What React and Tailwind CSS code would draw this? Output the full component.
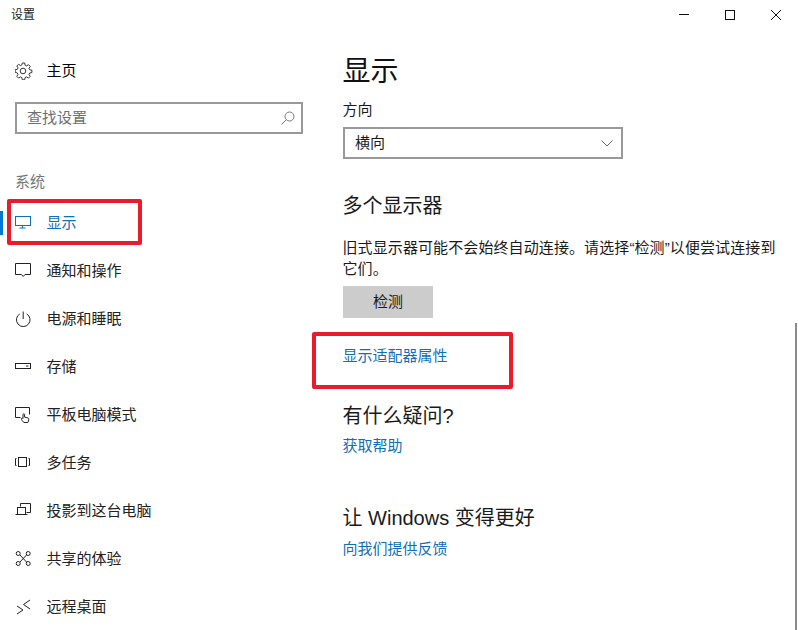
import React from "react";

const S = ({ children }) => (
  <svg width="18" height="18" viewBox="0 0 18 18" fill="none" stroke="currentColor" strokeWidth="1">
    {children}
  </svg>
);

const icons = {
  display: (
    <S>
      <rect x="0.500" y="2.500" width="15" height="9" />
      <path d="M7.500 11.500v2.500M4.500 14h6" />
    </S>
  ),
  notify: (
    <S>
      <path d="M.5 1.500h15v11H10l-1.800 2-1.800-2H.5z" />
    </S>
  ),
  power: (
    <S>
      <path d="M4.800 3.900a6.800 6.800 0 1 0 6.900 0" />
      <path d="M8.200 1.500v7.500" />
    </S>
  ),
  storage: (
    <S>
      <rect x="0.500" y="5.500" width="15" height="5" />
      <path d="M11 8h2.500" />
    </S>
  ),
  tablet: (
    <S>
      <path d="M5.500 11.500H.5v-10h14v7" />
      <path d="M9 16.500c-1-.6-2.600-2.600-2.600-3.800 0-.8 1-.9 1.600-.1V8.600c0-1.100 1.600-1.100 1.600 0v2.600l3.200.7c.7.2 1 .6 1 1.300 0 1.400-.4 2.300-1 3.300z" />
    </S>
  ),
  multitask: (
    <S>
      <rect x="3.500" y="3.500" width="8" height="9" />
      <path d="M1.500 4.500h-1v7h1M13.500 4.500h1v7h-1" />
    </S>
  ),
  project: (
    <S>
      <path d="M5.500 4.500v-3h10v9h-4" />
      <rect x="2.500" y="5.500" width="8" height="7" />
      <path d="M.5 12.500h12" />
    </S>
  ),
  share: (
    <S>
      <circle cx="3.200" cy="3.500" r="2" />
      <circle cx="13.200" cy="3.500" r="2" />
      <circle cx="3.200" cy="13.500" r="2" />
      <circle cx="13.200" cy="13.500" r="2" />
      <path d="M5 5l6.500 7M11.500 5L5 12" />
    </S>
  ),
  remote: (
    <S>
      <path d="M2 8l6 4-6 4M15 2L8.500 6.500 15 11" />
    </S>
  ),
};

const nav = [
  ["display", "显示"],
  ["notify", "通知和操作"],
  ["power", "电源和睡眠"],
  ["storage", "存储"],
  ["tablet", "平板电脑模式"],
  ["multitask", "多任务"],
  ["project", "投影到这台电脑"],
  ["share", "共享的体验"],
  ["remote", "远程桌面"],
];

const font = { fontFamily: '"Liberation Sans", "Noto Sans CJK SC", sans-serif' };

export default function App() {
  return (
    <div
      className="relative w-[798px] h-[630px] overflow-hidden bg-white text-[15px] leading-[24px] text-[#1a1a1a]"
      style={font}
    >
      {/* title bar */}
      <div className="flex h-[30px] items-center justify-between">
        <span className="pl-[11px] text-[12px] leading-[28px] text-[#222]">设置</span>
        <div className="flex items-center gap-[36px] pr-[17px] text-[#111]">
          <svg width="10" height="10" viewBox="0 0 10 10" stroke="currentColor"><path d="M0 4.500h10" /></svg>
          <svg width="10" height="10" viewBox="0 0 10 10" fill="none" stroke="currentColor"><rect x="0.500" y="0.500" width="9" height="9" /></svg>
          <svg width="10" height="10" viewBox="0 0 10 10" stroke="currentColor"><path d="M0 0l10 10M10 0L0 10" /></svg>
        </div>
      </div>

      <div className="flex">
        {/* sidebar */}
        <aside className="w-[343px] shrink-0">
          <div className="mt-[17px] flex h-[48px] items-center pl-[15px] text-black">
            <svg width="18" height="18" viewBox="0 0 18 18" fill="none" stroke="#333" strokeWidth="1">
              <circle cx="8" cy="9" r="2.800" />
              <path d="M7.300 1h2.400l.4 2.200 1.500.7 1.900-1.200 1.700 1.700-1.200 1.900.7 1.500 2.200.4v2.400l-2.200.4-.7 1.500 1.200 1.900-1.700 1.700-1.900-1.200-1.500.7-.4 2.200H7.300l-.4-2.200-1.500-.7-1.900 1.200-1.700-1.700 1.200-1.900-.7-1.500L.1 10.200V7.800l2.200-.4.7-1.500-1.200-1.900 1.700-1.700 1.900 1.200 1.500-.7z" />
            </svg>
            <span className="ml-[13.500px]">主页</span>
          </div>

          <div className="ml-[15px] mt-[7px] flex h-[32px] w-[288px] items-center justify-between border-2 border-[#999] pl-[10px] pr-[6px] text-[#6f6f6f]">
            <span>查找设置</span>
            <svg width="14" height="14" viewBox="0 0 14 14" fill="none" stroke="#777" strokeWidth="1">
              <circle cx="8.500" cy="5.500" r="4.500" />
              <path d="M5.300 8.700L.5 13.500" />
            </svg>
          </div>

          <div className="ml-[15px] mt-[36px] h-[24px] text-[#777]">系统</div>

          <nav className="mt-[5px]">
            {nav.map(([key, label], i) => (
              <div
                key={key}
                className={
                  i === 0
                    ? "relative flex h-[48px] items-center pl-[15px] text-[#0f6fb8]"
                    : "relative flex h-[48px] items-center pl-[15px] text-[#222]"
                }
              >
                {i === 0 && <div className="absolute left-0 top-[12px] h-[24px] w-[3px] bg-[#0078d7]" />}
                {icons[key]}
                <span className="ml-[13.500px]">{label}</span>
              </div>
            ))}
          </nav>
        </aside>

        {/* main */}
        <main className="-ml-[0.500px] w-[441px]">
          <h1 className="mt-[22px] h-[40px] text-[28px] leading-[40px] text-[#111]">显示</h1>
          <div className="mt-[6px] h-[24px]">方向</div>
          <div className="mt-[5px] ml-[0.500px] flex h-[32px] w-[280px] items-center justify-between border-2 border-[#999] pl-[10px] pr-[8px]">
            <span>横向</span>
            <svg width="12" height="7" viewBox="0 0 12 7" fill="none" stroke="#666" strokeWidth="1">
              <path d="M.5.500L6 6l5.500-5.500" />
            </svg>
          </div>
          <h2 className="mt-[32px] h-[30px] text-[20px] leading-[30px]">多个显示器</h2>
          <p className="mt-[16px] w-[441px] text-[15px] leading-[21px] tracking-[0.1px]">
            旧式显示器可能不会始终自动连接。请选择“检测”以便尝试连接到它们。
          </p>
          <div className="ml-[0.500px] mt-[7px] flex h-[32px] w-[90px] items-center justify-center bg-[#cccccc]">
            <span className="-mt-[1px]">检测</span>
          </div>
          <div className="mt-[26px] h-[24px] text-[#0f6fb8]">显示适配器属性</div>
          <h2 className="mt-[33px] h-[30px] text-[20px] leading-[30px]">有什么疑问?</h2>
          <div className="mt-[3px] h-[24px] text-[#0f6fb8]">获取帮助</div>
          <h2 className="mt-[45px] h-[30px] text-[20px] leading-[30px]">让 Windows 变得更好</h2>
          <div className="mt-[4px] h-[24px] text-[#0f6fb8]">向我们提供反馈</div>
        </main>
      </div>

      {/* annotations */}
      <div className="absolute left-[7px] top-[199px] h-[46px] w-[135px] rounded-[2px] border-[4px] border-[#e81c2b]" />
      <div className="absolute left-[312px] top-[332px] h-[57px] w-[201px] rounded-[2px] border-[4px] border-[#e81c2b]" />
      {/* scrollbar */}
      <div className="absolute right-[1px] top-[323px] h-[307px] w-[2px] bg-[#8a8a8a]" />
    </div>
  );
}
